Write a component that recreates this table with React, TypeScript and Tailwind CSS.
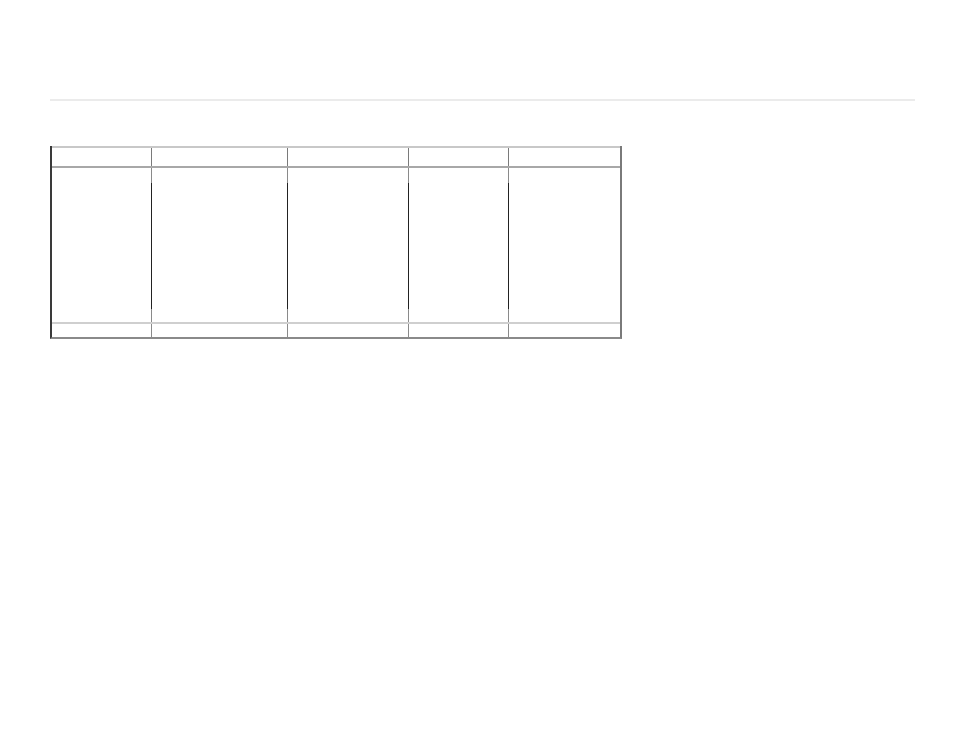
import React from "react";

const columns = [
    { key: "a", width: "w-[99px]" },
    { key: "b", width: "w-[136px]" },
    { key: "c", width: "w-[121px]" },
    { key: "d", width: "w-[100px]" },
    { key: "e", width: "flex-1" },
];

const App = () => {
    return (
        <div className="min-h-[738px] w-full bg-white pl-[50px] pr-[39px] pt-[99px] font-['Liberation_Sans',sans-serif]">
            {/* Divider */}
            <div className="h-[2px] w-full bg-[#ebebeb]" />

            {/* Table */}
            <div className="mt-[45px] flex w-[572px] flex-col border-l-2 border-r-2 border-b-2 border-l-[#3a3a3a] border-r-[#7a7a7a] border-b-[#8a8a8a]">
                {/* Header */}
                <div className="flex h-[22px] border-t-2 border-b-2 border-t-[#c8c8c8] border-b-[#a8a8a8]">
                    {columns.map((col, i) => (
                        <div
                            key={col.key}
                            className={`${col.width} h-full ${i > 0 ? "border-l border-[#7a7a7a]" : ""}`}
                        />
                    ))}
                </div>

                {/* Body */}
                <div className="flex h-[154px]">
                    {columns.map((col, i) => (
                        <div
                            key={col.key}
                            className={`${col.width} flex h-full flex-col ${i > 0 ? "border-l border-[#8a8a8a]" : ""}`}
                        >
                            {i > 0 && (
                                <div className="-ml-px mt-[15px] h-[126px] w-px bg-[#222]" />
                            )}
                        </div>
                    ))}
                </div>

                {/* Footer */}
                <div className="flex h-[15px] border-t-2 border-[#cfcfcf]">
                    {columns.map((col, i) => (
                        <div
                            key={col.key}
                            className={`${col.width} h-full ${i > 0 ? "border-l border-[#8a8a8a]" : ""}`}
                        />
                    ))}
                </div>
            </div>
        </div>
    );
};

export default App;
